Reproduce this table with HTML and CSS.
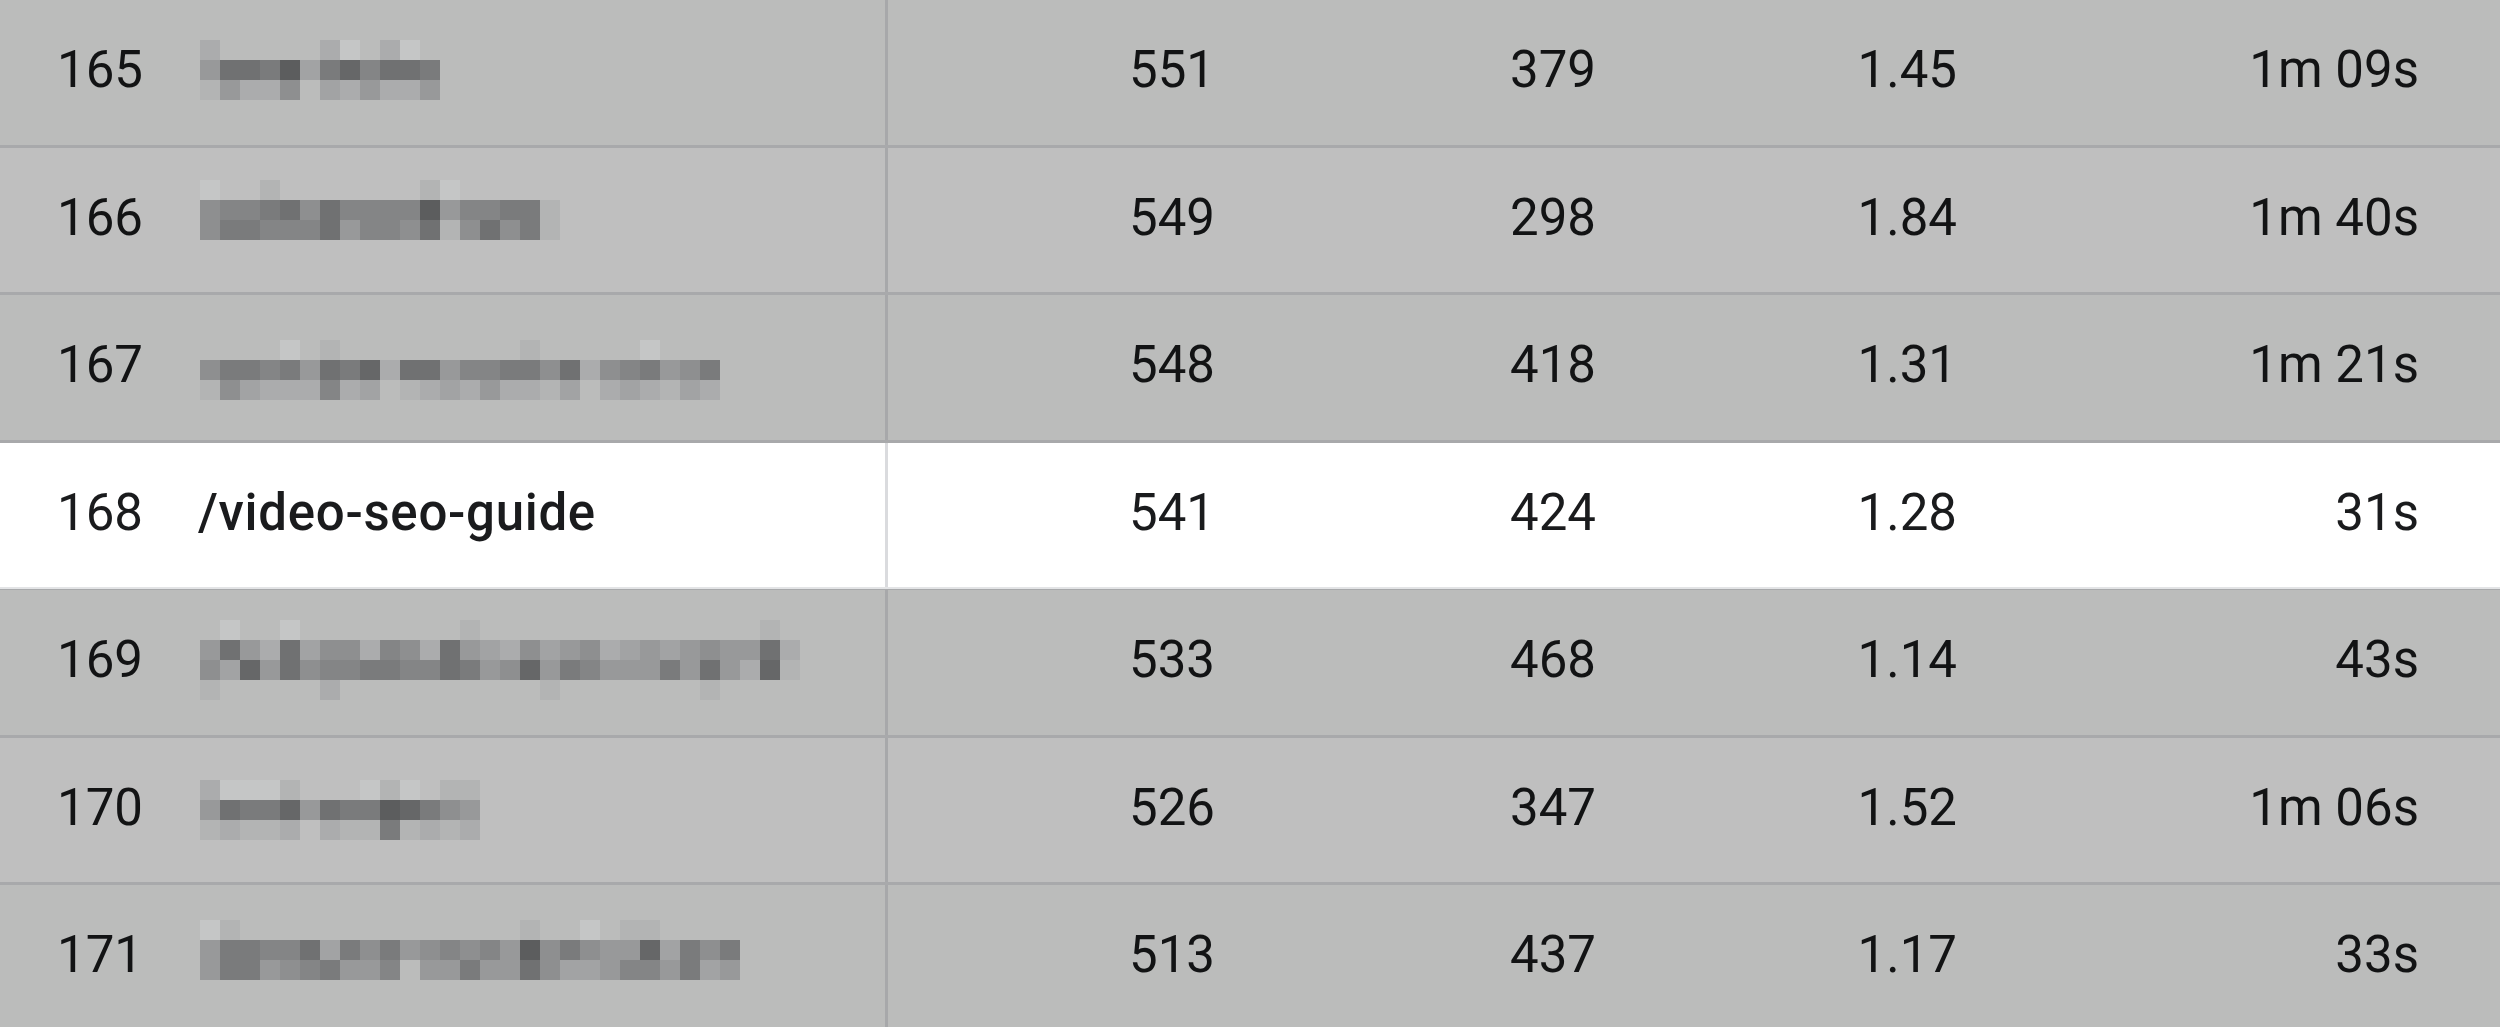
FILE: index.html
```html
<!DOCTYPE html>
<html lang="en">
<head>
<meta charset="utf-8">
<title>Pages report</title>
<link rel="stylesheet" href="styles.css">
</head>
<body>
<div class="table">
  <div class="row odd">
    <div class="cell rank">165</div>
    <div class="cell path"><div class="mosaic" data-top="40" data-rows="8.....8b.8b.|622307314223|96885.786886"></div></div>
    <div class="cell num">551</div>
    <div class="cell num">379</div>
    <div class="cell num">1.45</div>
    <div class="cell num">1m 09s</div>
  </div>
  <div class="row even">
    <div class="cell rank">166</div>
    <div class="cell path"><div class="mosaic" data-top="32.5" data-rows="b..9.......9b.....|544325244440644339|533444264452952539"></div></div>
    <div class="cell num">549</div>
    <div class="cell num">298</div>
    <div class="cell num">1.84</div>
    <div class="cell num">1m 40s</div>
  </div>
  <div class="row odd">
    <div class="cell rank">167</div>
    <div class="cell path"><div class="mosaic" data-top="45" data-rows="....b.9.........9.....b...|53343623182264433528543653|957888487.987868897.878978"></div></div>
    <div class="cell num">548</div>
    <div class="cell num">418</div>
    <div class="cell num">1.31</div>
    <div class="cell num">1m 21s</div>
  </div>
  <div class="row active">
    <div class="cell rank">168</div>
    <div class="cell path"><span class="url">/video-seo-guide</span></div>
    <div class="cell num">541</div>
    <div class="cell num">424</div>
    <div class="cell num">1.28</div>
    <div class="cell num">31s</div>
  </div>
  <div class="row odd">
    <div class="cell rank">169</div>
    <div class="cell path"><div class="mosaic" data-top="30" data-rows=".b..b........9..............9.|626827558458267857658767656628|571625443344236516346663626819|9.....8..........9.......9...."></div></div>
    <div class="cell num">533</div>
    <div class="cell num">468</div>
    <div class="cell num">1.14</div>
    <div class="cell num">43s</div>
  </div>
  <div class="row even">
    <div class="cell rank">170</div>
    <div class="cell path"><div class="mosaic" data-top="42.5" data-rows="8bbb9...b9b.99|62331623301356|98998.89939898"></div></div>
    <div class="cell num">526</div>
    <div class="cell num">347</div>
    <div class="cell num">1.52</div>
    <div class="cell num">1m 06s</div>
  </div>
  <div class="row odd">
    <div class="cell rank">171</div>
    <div class="cell path"><div class="mosaic" data-top="35" data-rows="b9..............9..b.99....|633442735365454605356617353|6336543664.6636625776446376"></div></div>
    <div class="cell num">513</div>
    <div class="cell num">437</div>
    <div class="cell num">1.17</div>
    <div class="cell num">33s</div>
  </div>
</div>
<script src="script.js"></script>
</body>
</html>
```

FILE: styles.css
```css
html, body {
  margin: 0;
  padding: 0;
}

body {
  width: 2500px;
  height: 1027px;
  overflow: hidden;
  background: #bbbcbb;
  font-family: Roboto, "Noto Sans", "Liberation Sans", sans-serif;
  font-size: 51px;
  color: #121314;
}

.row {
  display: grid;
  grid-template-columns: 198px 690px 327px 381px 361px 462px;
  padding-right: 81px;
  height: 147.5px;
  box-sizing: border-box;
  border-bottom: 3px solid #a8a9ab;
}

.row.odd {
  background: #bbbcbb;
}

.row.even {
  background: #bfbfbf;
}

.row.active {
  color: #1a1b1d;
  border-bottom-color: transparent;
  background: linear-gradient(to top, #a8a9ab 0 1px, #e3e4e6 1px 3px, #ffffff 3px);
  background-origin: border-box;
}

.cell {
  display: flex;
  align-items: center;
  padding-bottom: 5px;
  white-space: nowrap;
}

.rank {
  padding-left: 57px;
}

.path {
  border-right: 3px solid #a7a8aa;
}

.active .path {
  border-right-color: #dadbde;
}

.url {
  font-weight: 500;
  letter-spacing: 0.7px;
}

.num {
  justify-content: flex-end;
}

.mosaic {
  display: grid;
  grid-auto-rows: 20px;
  align-self: flex-start;
  margin-left: 2px;
}

.px {
  display: block;
}
```

FILE: script.js
```js
const shades = {
  '0': '#5c5d5e', '1': '#666768', '2': '#707172', '3': '#7a7b7c',
  '4': '#848586', '5': '#8e8f90', '6': '#98999a', '7': '#a2a3a4',
  '8': '#abacad', '9': '#b3b4b4', 'b': '#c5c6c6'
};
document.querySelectorAll('.mosaic').forEach(function (m) {
  const rows = m.dataset.rows.split('|');
  m.style.gridTemplateColumns = 'repeat(' + rows[0].length + ', 20px)';
  m.style.marginTop = m.dataset.top + 'px';
  rows.forEach(function (r) {
    for (const ch of r) {
      const c = document.createElement('span');
      c.className = 'px';
      if (shades[ch]) c.style.background = shades[ch];
      m.appendChild(c);
    }
  });
});
```
